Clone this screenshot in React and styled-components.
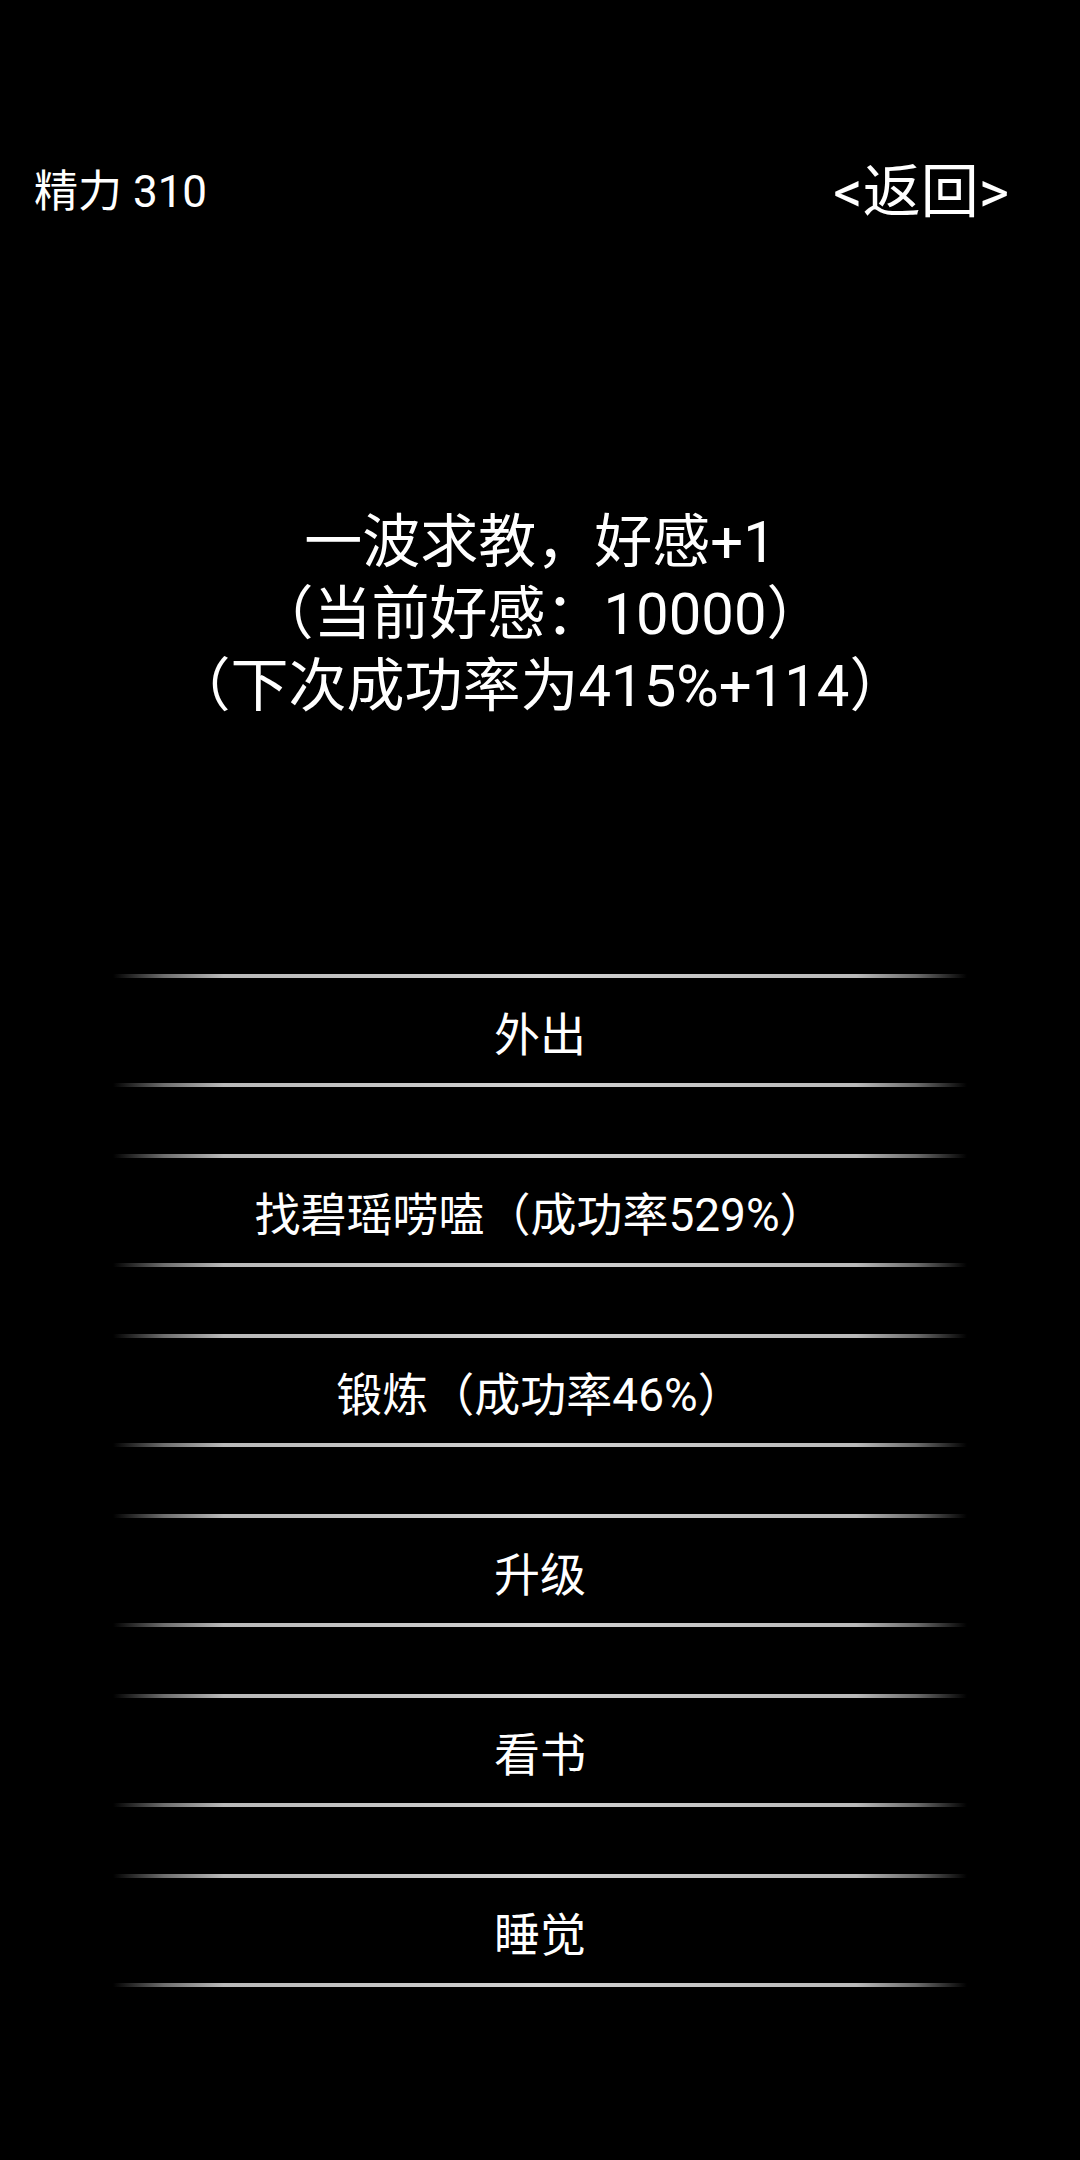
import React from "react";
import styled, { createGlobalStyle } from "styled-components";

const GlobalStyle = createGlobalStyle`
  html, body {
    margin: 0;
    padding: 0;
    background: #000;
  }
  body {
    font-family: Roboto, "Noto Sans CJK SC", sans-serif;
    color: #fff;
  }
`;

const Screen = styled.div`
  width: 1080px;
  min-height: 2160px;
  background: #000;
  display: flex;
  flex-direction: column;
`;

const TopBar = styled.div`
  display: flex;
  justify-content: space-between;
  align-items: center;
  padding: 160px 71px 0 34px;
  height: 64px;
`;

const Energy = styled.div`
  font-size: 44px;
  line-height: 64px;
`;

const BackLink = styled.a`
  font-size: 58px;
  line-height: 64px;
  color: #fff;
  text-decoration: none;
  cursor: pointer;
`;

const Message = styled.div`
  margin-top: 282px;
  text-align: center;
  font-size: 58px;
  line-height: 72px;
`;

const Menu = styled.div`
  margin: 252px auto 0;
  width: 854px;
  display: flex;
  flex-direction: column;
  gap: 67px;
`;

const Divider = styled.div`
  height: 4px;
  background: linear-gradient(
    90deg,
    rgba(200, 200, 200, 0) 0%,
    rgba(200, 200, 200, 0.55) 6%,
    rgba(205, 205, 205, 0.9) 13%,
    rgba(210, 210, 210, 1) 50%,
    rgba(205, 205, 205, 0.9) 87%,
    rgba(200, 200, 200, 0.55) 94%,
    rgba(200, 200, 200, 0) 100%
  );
  filter: blur(0.6px);
`;

const MenuButton = styled.div`
  display: flex;
  flex-direction: column;
  cursor: pointer;
`;

const Label = styled.div`
  height: 105px;
  display: flex;
  align-items: center;
  justify-content: center;
  font-size: 46px;
  color: #fff;
`;

const actions = [
  "外出",
  "找碧瑶唠嗑（成功率529%）",
  "锻炼（成功率46%）",
  "升级",
  "看书",
  "睡觉",
];

export default function App() {
  return (
    <>
      <GlobalStyle />
      <Screen>
        <TopBar>
          <Energy>精力 310</Energy>
          <BackLink>&lt;返回&gt;</BackLink>
        </TopBar>
        <Message>
          <div>一波求教，好感+1</div>
          <div>（当前好感：10000）</div>
          <div>（下次成功率为415%+114）</div>
        </Message>
        <Menu>
          {actions.map((a) => (
            <MenuButton key={a}>
              <Divider />
              <Label>{a}</Label>
              <Divider />
            </MenuButton>
          ))}
        </Menu>
      </Screen>
    </>
  );
}
